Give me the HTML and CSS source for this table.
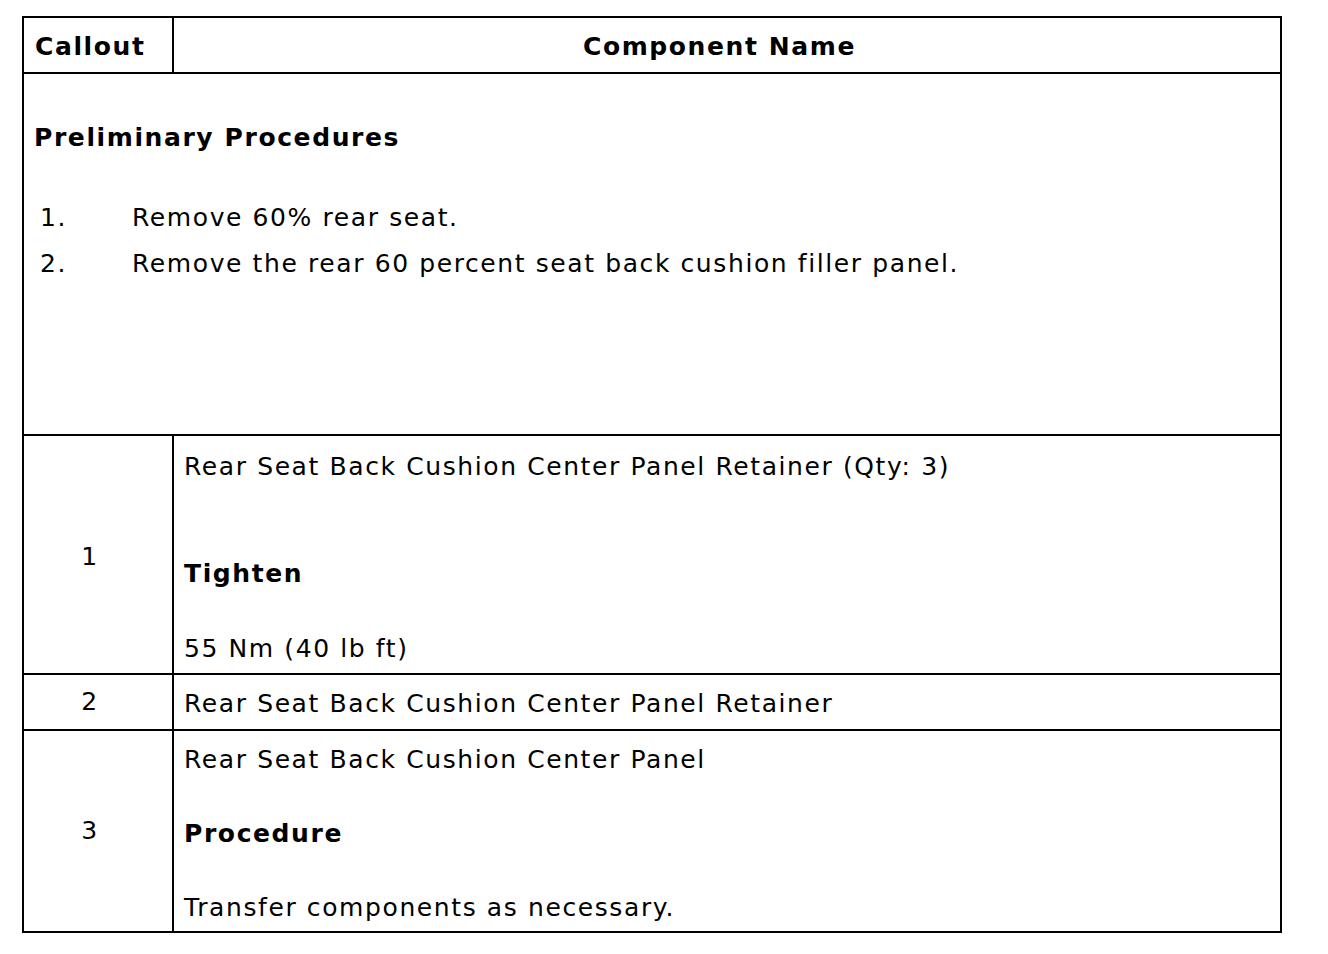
FILE: index.html
```html
<!DOCTYPE html>
<html lang="en">
<head>
<meta charset="utf-8">
<title>Components</title>
<link rel="stylesheet" href="styles.css">
</head>
<body>
<div class="parts">
  <div class="cell head callout-h">Callout</div>
  <div class="cell head name-h">Component Name</div>

  <div class="cell prelim">
    <h2 class="prelim-title">Preliminary Procedures</h2>
    <ol class="steps">
      <li class="step"><span class="step-no">1.</span><span>Remove 60% rear seat.</span></li>
      <li class="step"><span class="step-no">2.</span><span>Remove the rear 60 percent seat back cushion filler panel.</span></li>
    </ol>
  </div>

  <div class="cell num num-1">1</div>
  <div class="cell desc desc-1">
    <p class="line">Rear Seat Back Cushion Center Panel Retainer (Qty: 3)</p>
    <p class="line bold gap-lg">Tighten</p>
    <p class="line gap-sm">55 Nm (40 lb ft)</p>
  </div>

  <div class="cell num">2</div>
  <div class="cell desc desc-2">
    <p class="line">Rear Seat Back Cushion Center Panel Retainer</p>
  </div>

  <div class="cell num">3</div>
  <div class="cell desc desc-3">
    <p class="line">Rear Seat Back Cushion Center Panel</p>
    <p class="line bold gap-a">Procedure</p>
    <p class="line gap-b">Transfer components as necessary.</p>
  </div>
</div>
</body>
</html>
```

FILE: styles.css
```css
* { box-sizing: border-box; }

html, body {
  margin: 0;
  padding: 0;
  background: #fff;
}

body {
  padding: 16px 0 0 22px;
  font-family: "DejaVu Sans", Verdana, sans-serif;
  font-size: 25px;
  line-height: 30px;
  letter-spacing: 1.6px;
  color: #000;
}

.parts {
  display: grid;
  grid-template-columns: 148px 1106px;
  gap: 2px;
  padding: 2px;
  background: #000;
  width: 1260px;
}

.cell {
  background: #fff;
}

.head {
  font-weight: bold;
  height: 54px;
  padding: 14px 10px 0 11px;
  white-space: nowrap;
}

.name-h {
  text-align: center;
  padding-right: 26px;
}

.prelim {
  grid-column: 1 / -1;
  height: 360px;
  padding: 49px 10px 0 10px;
}

.prelim-title {
  margin: 0;
  font-size: 25px;
  line-height: 30px;
  font-weight: bold;
}

.steps {
  list-style: none;
  margin: 50px 0 0 0;
  padding: 0;
  display: flex;
  flex-direction: column;
  gap: 16px;
}

.step {
  display: grid;
  grid-template-columns: 98px 1fr;
}

.step-no {
  padding-left: 6px;
}

.num {
  display: flex;
  align-items: center;
  justify-content: center;
  padding-right: 16px;
}

.num-1 { padding-top: 4px; }

.desc {
  padding: 10px 10px 0 10px;
}

.line {
  margin: 0;
  white-space: nowrap;
}

.bold { font-weight: bold; }

.gap-lg { margin-top: 77px; }
.gap-sm { margin-top: 45px; }
.gap-a { margin-top: 44px; }
.gap-b { margin-top: 44px; }

.desc-1 { height: 237px; padding-top: 16px; }
.desc-2 { height: 54px; padding-top: 14px; }
.desc-3 { height: 200px; padding-top: 14px; }
```
